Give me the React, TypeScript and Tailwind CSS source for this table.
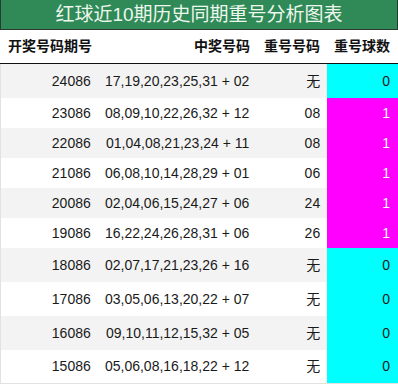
const rows = [
  { issue: '24086', nums: '17,19,20,23,25,31 + 02', repeat: '无', count: 0, h: 'h-[34px]' },
  { issue: '23086', nums: '08,09,10,22,26,32 + 12', repeat: '08', count: 1, h: 'h-[30px]' },
  { issue: '22086', nums: '01,04,08,21,23,24 + 11', repeat: '08', count: 1, h: 'h-[30px]' },
  { issue: '21086', nums: '06,08,10,14,28,29 + 01', repeat: '06', count: 1, h: 'h-[30px]' },
  { issue: '20086', nums: '02,04,06,15,24,27 + 06', repeat: '24', count: 1, h: 'h-[30px]' },
  { issue: '19086', nums: '16,22,24,26,28,31 + 06', repeat: '26', count: 1, h: 'h-[30px]' },
  { issue: '18086', nums: '02,07,17,21,23,26 + 16', repeat: '无', count: 0, h: 'h-[34px]' },
  { issue: '17086', nums: '03,05,06,13,20,22 + 07', repeat: '无', count: 0, h: 'h-[34px]' },
  { issue: '16086', nums: '09,10,11,12,15,32 + 05', repeat: '无', count: 0, h: 'h-[34px]' },
  { issue: '15086', nums: '05,06,08,16,18,22 + 12', repeat: '无', count: 0, h: 'h-[33px]' },
]

export default function App() {
  return (
    <div className="w-[398px] h-[386px] bg-white text-[14px] text-[#1a1a1a] overflow-hidden font-['Liberation_Sans','Noto_Sans_CJK_SC',sans-serif]">
      <div className="h-[30px] bg-[#2f8a57] border-x border-b border-[#2a3a30] flex items-center justify-center text-[19px] text-[#eef7ee] leading-none">
        红球近10期历史同期重号分析图表
      </div>

      <div className="h-[34px] flex items-center font-bold text-[#111] border-b border-[#111]">
        <div className="w-[98px] pl-2">开奖号码期号</div>
        <div className="w-[160px] pr-2 text-right">中奖号码</div>
        <div className="w-[69px] pr-[7px] text-right">重号号码</div>
        <div className="w-[71px] pr-2 text-right">重号球数</div>
      </div>

      <div className="border-l border-b border-[#e2e2e2]">
        {rows.map((r, i) => (
          <div key={r.issue} className={`flex items-stretch ${r.h} ${i % 2 === 0 ? 'bg-[#f3f3f3]' : 'bg-white'}`}>
            <div className="w-[97px] pr-[7px] flex items-center justify-end">{r.issue}</div>
            <div className="w-[160px] pr-2 flex items-center justify-end">{r.nums}</div>
            <div className="w-[70px] pr-[7px] flex items-center justify-end">{r.repeat}</div>
            <div
              className={`w-[71px] pr-2 flex items-center justify-end ${
                r.count ? 'bg-[#ff00ff] text-white' : 'bg-[#00ffff] text-[#1a1a1a]'
              }`}
            >
              {r.count}
            </div>
          </div>
        ))}
      </div>
    </div>
  )
}
